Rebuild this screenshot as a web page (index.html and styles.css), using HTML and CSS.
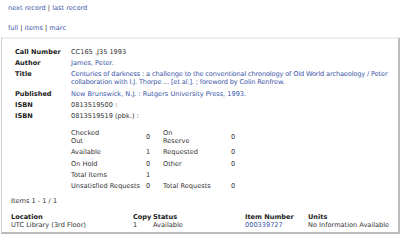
FILE: index.html
```html
<!DOCTYPE html>
<html lang="en">
<head>
    <meta charset="UTF-8">
    <title>Record</title>
    <link rel="stylesheet" href="styles.css">
</head>
<body>
    <div class="nav">
        <a href="#">next record</a> | <a href="#">last record</a>
    </div>
    <div class="nav tabs">
        <a href="#">full</a> | <a href="#">items</a> | <a href="#">marc</a>
    </div>
    <div class="record">
        <div class="details">
            <div class="label">Call Number</div>
            <div class="value">CC165 .J35 1993</div>
            <div class="label">Author</div>
            <div class="value"><a href="#">James, Peter.</a></div>
            <div class="label">Title</div>
            <div class="value title"><a href="#">Centuries of darkness : a challenge to the conventional chronology of Old World archaeology / Peter<br>collaboration with I.J. Thorpe ... [et al.]. ; foreword by Colin Renfrew.</a></div>
            <div class="label">Published</div>
            <div class="value"><a href="#">New Brunswick, N.J. : Rutgers University Press, 1993.</a></div>
            <div class="label">ISBN</div>
            <div class="value">0813519500 :</div>
            <div class="label">ISBN</div>
            <div class="value">0813519519 (pbk.) :</div>
        </div>
        <div class="stats">
            <span>Checked<br>Out</span><span>0</span><span>On<br>Reserve</span><span>0</span>
            <span>Available</span><span>1</span><span>Requested</span><span>0</span>
            <span>On Hold</span><span>0</span><span>Other</span><span>0</span>
            <span>Total Items</span><span>1</span><span></span><span></span>
            <span>Unsatisfied Requests</span><span>0</span><span>Total Requests</span><span>0</span>
        </div>
        <div class="count">Items 1 - 1 / 1</div>
        <div class="items">
            <b>Location</b><b>Copy</b><b>Status</b><b>Item Number</b><b>Units</b>
            <span>UTC Library (3rd Floor)</span><span>1</span><span>Available</span><a href="#">000339727</a><span>No Information Available</span>
        </div>
        <button class="cart">Save to Cart</button>
    </div>
</body>
</html>
```

FILE: styles.css
```css
body {
    margin: 0;
    font-family: "DejaVu Sans", Verdana, sans-serif;
    font-size: 6.6px;
    line-height: 9px;
    color: #333;
    background: #fff;
}
a {
    color: #3a55a8;
    text-decoration: none;
}
.nav {
    padding: 4px 8px 0;
    color: #333;
}
.tabs {
    padding-top: 11px;
    padding-bottom: 4px;
}
.record {
    border-top: 2px solid #eee;
    border-left: 1px solid #ccc;
    border-right: 2px solid #bbb;
    border-bottom: 2px solid #bbb;
    margin: 0 0 0 1px;
    padding: 9px 0 4px 9px;
    height: 197px;
    box-sizing: border-box;
}
.details {
    display: grid;
    grid-template-columns: 56px 1fr;
    row-gap: 2px;
    padding-left: 4px;
}
.label {
    font-weight: bold;
    color: #222;
}
.title {
    white-space: nowrap;
    letter-spacing: -0.14px;
    line-height: 8px;
    padding-bottom: 2px;
}
.stats {
    display: grid;
    grid-template-columns: 75px 17px 68px 10px;
    grid-template-rows: 18px 12px 12px 11px 11px;
    margin: 7px 0 0 60px;
    align-items: center;
}
.stats span:nth-child(-n+4) {
    line-height: 8px;
}
.count {
    margin-top: 5px;
}
.items {
    display: grid;
    grid-template-columns: 122px 20px 92px 63px 1fr;
    margin-top: 7px;
    line-height: 8px;
}
.items b {
    color: #222;
}
.cart {
    margin-top: 6px;
    font-family: "DejaVu Sans", Verdana, sans-serif;
    font-size: 6.6px;
    width: 62px;
    height: 13px;
    padding: 0;
    color: #333;
    background: #f0f0f0;
    border: 1px solid #999;
    border-top-color: #eee;
    border-left-color: #eee;
}
```
